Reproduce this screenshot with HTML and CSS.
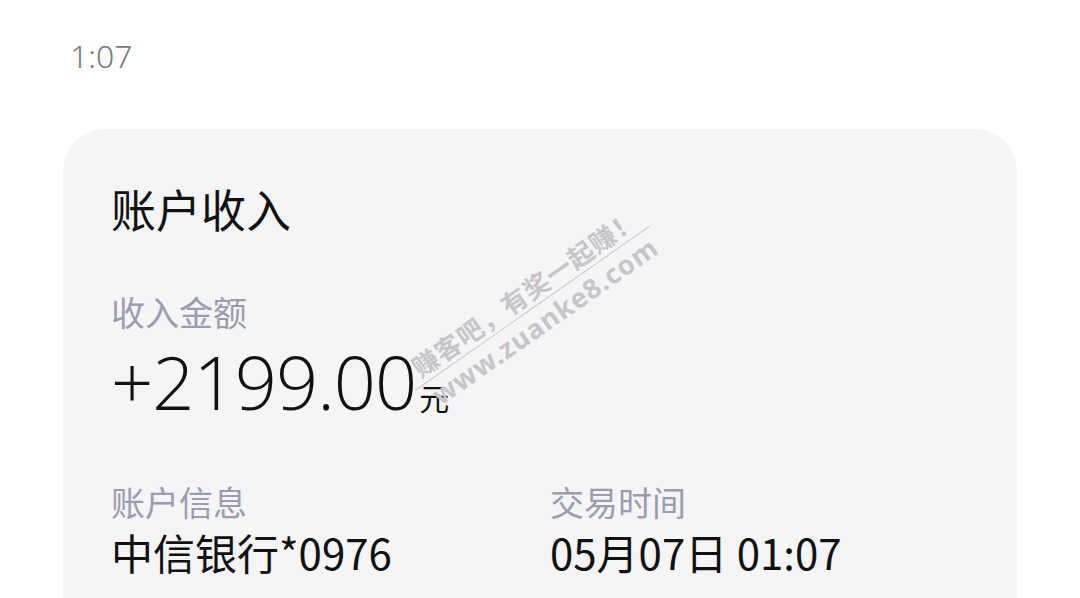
FILE: index.html
```html
<!DOCTYPE html>
<html lang="zh-CN">
<head>
<meta charset="utf-8">
<link rel="stylesheet" href="styles.css">
</head>
<body>
<div class="status">1:07</div>
<div class="card">
  <div class="title">账户收入</div>
  <div class="label">收入金额</div>
  <div class="amount"><span class="num">+2199.00</span><span class="unit">元</span></div>
  <div class="info">
    <div class="col">
      <div class="label">账户信息</div>
      <div class="value">中信银行*0976</div>
    </div>
    <div class="col">
      <div class="label">交易时间</div>
      <div class="value">05月07日 01:07</div>
    </div>
  </div>
</div>
<div class="watermark">
  <div class="wm-top">赚客吧，有奖一起赚！</div>
  <div class="wm-line"></div>
  <div class="wm-bottom">www.zuanke8.com</div>
</div>
</body>
</html>
```

FILE: styles.css
```css
html, body {
  margin: 0;
  padding: 0;
  background: #ffffff;
  width: 1080px;
  height: 598px;
  overflow: hidden;
  font-family: "Noto Sans CJK SC", "Noto Sans", sans-serif;
  position: relative;
}
.status {
  padding: 34px 0 0 70px;
  font-size: 32px;
  line-height: 44px;
  color: #7a7a7a;
  font-family: "Noto Sans", "Noto Sans CJK SC", sans-serif;
  font-weight: 300;
}
.card {
  margin: 51px 63px 0 63px;
  background: #f5f5f7;
  border-radius: 42px 42px 0 0;
  padding: 50px 48px 0 48px;
  height: 469px;
  box-sizing: border-box;
  overflow: hidden;
}
.title {
  font-size: 45px;
  line-height: 60px;
  color: #111111;
}
.label {
  font-size: 34px;
  line-height: 44px;
  color: #9b9cb0;
}
.card > .label {
  margin-top: 51px;
}
.amount {
  display: flex;
  align-items: baseline;
  color: #111111;
  margin-top: 11px;
}
.num {
  font-size: 74px;
  line-height: 74px;
  font-family: "Open Sans", "Noto Sans", sans-serif;
  font-weight: 300;
  letter-spacing: -1px;
}
.unit {
  font-size: 30px;
  line-height: 40px;
  margin-left: 3px;
}
.info {
  display: flex;
  margin-top: 61px;
}
.col {
  display: flex;
  flex-direction: column;
}
.col:first-child {
  width: 439px;
  flex-shrink: 0;
}
.col:last-child {
  flex: 1;
}
.value {
  font-size: 42px;
  line-height: 46px;
  color: #111111;
  margin-top: 5px;
}
.watermark {
  position: absolute;
  left: 375px;
  top: 273px;
  width: 320px;
  transform: rotate(-35deg);
  transform-origin: center;
  color: #c6c6ca;
  text-align: center;
  font-weight: 700;
}
.wm-top {
  font-size: 26px;
  line-height: 32px;
  letter-spacing: 1px;
}
.wm-line {
  height: 1px;
  background: #c8c8cc;
  margin: 1px 20px 1px 14px;
}
.wm-bottom {
  font-size: 27px;
  line-height: 32px;
  font-family: "Noto Sans", sans-serif;
  letter-spacing: 1px;
}
```
